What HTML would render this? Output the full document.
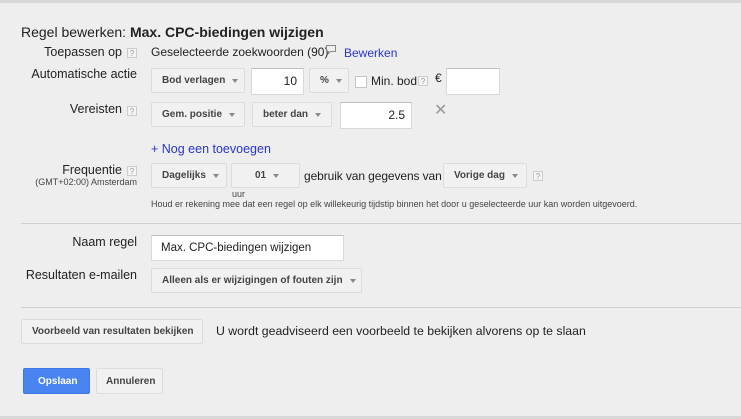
<!DOCTYPE html>
<html><head><meta charset="utf-8"><style>
*{box-sizing:border-box;margin:0;padding:0}
body{width:741px;height:419px;background:#eeeeee;font-family:"Liberation Sans",Arial,sans-serif;color:#222;position:relative;overflow:hidden;font-size:12px}
.a{position:absolute;white-space:nowrap}
.lbl{position:absolute;text-align:right;white-space:nowrap;font-size:12.5px}
.q{position:absolute;width:10px;height:10px;border:1px solid #ccc;background:#f4f4f4;font-size:8px;color:#999;text-align:center;line-height:9px}
.btn{position:absolute;border:1px solid #dcdcdc;background:#f1f1f1;border-radius:2px;font-weight:bold;font-size:10px;color:#444;display:flex;align-items:center;padding-left:10px;white-space:nowrap;overflow:hidden}
.btn .c{display:inline-block;width:0;height:0;border-left:3.5px solid transparent;border-right:3.5px solid transparent;border-top:4px solid #888;margin-left:7px}
.inp{position:absolute;background:#fff;border:1px solid #d9d9d9;border-top-color:#c0c0c0;font-size:12px;line-height:25px;padding:0 6px}
.hr{position:absolute;left:21px;right:0;height:1px;background:#d0d0d0}
</style></head><body>
<div class="a" style="left:0;right:0;top:0;height:3px;background:#d8d8d8"></div>
<div class="a" style="left:21px;top:24px;font-size:14px">Regel bewerken: <b>Max. CPC-biedingen wijzigen</b></div>

<div class="lbl" style="right:619px;top:45px">Toepassen op</div>
<div class="q" style="left:127px;top:48px">?</div>
<div class="a" style="left:151px;top:45px;font-size:12px">Geselecteerde zoekwoorden (90)</div>
<svg class="a" style="left:326px;top:45px" width="10" height="9"><path d="M0.5 0.5h9v6h-5l-2 2v-2h-2z" fill="none" stroke="#888"/></svg>
<div class="a" style="left:344px;top:46px;color:#2a34d0">Bewerken</div>

<div class="lbl" style="right:604px;top:67px">Automatische actie</div>
<div class="btn" style="left:151px;top:68px;width:94px;height:25px">Bod verlagen<span class="c"></span></div>
<div class="inp" style="left:251px;top:68px;width:53px;height:27px;text-align:right">10</div>
<div class="btn" style="left:309px;top:68px;width:40px;height:25px">%<span class="c"></span></div>
<div class="a" style="left:355px;top:76px;width:12px;height:12px;border:1px solid #c6c6c6;background:#fff"></div>
<div class="a" style="left:371px;top:74px;font-size:12px">Min. bod</div>
<div class="q" style="left:418px;top:76px">?</div>
<div class="a" style="left:435px;top:71px">€</div>
<div class="inp" style="left:446px;top:68px;width:54px;height:27px"></div>

<div class="lbl" style="right:619px;top:102px">Vereisten</div>
<div class="q" style="left:127px;top:106px">?</div>
<div class="btn" style="left:151px;top:102px;width:94px;height:25px">Gem. positie<span class="c"></span></div>
<div class="btn" style="left:252px;top:102px;width:80px;height:25px">beter dan<span class="c"></span></div>
<div class="inp" style="left:340px;top:102px;width:72px;height:27px;text-align:right">2.5</div>
<div class="a" style="left:434px;top:100px;font-size:16px;color:#999">✕</div>

<div class="a" style="left:151px;top:142px;color:#2a34d0;font-size:12.5px">+ Nog een toevoegen</div>

<div class="lbl" style="right:619px;top:163px">Frequentie</div>
<div class="q" style="left:127px;top:166px">?</div>
<div class="lbl" style="right:604px;top:177px;font-size:9px;color:#444">(GMT+02:00) Amsterdam</div>
<div class="btn" style="left:151px;top:163px;width:76px;height:25px">Dagelijks<span class="c"></span></div>
<div class="btn" style="left:231px;top:163px;width:69px;height:25px;padding-left:23px">01<span class="c"></span></div>
<div class="a" style="left:304px;top:169px;font-size:12px;letter-spacing:-0.1px">gebruik van gegevens van</div>
<div class="btn" style="left:443px;top:163px;width:84px;height:25px">Vorige dag<span class="c"></span></div>
<div class="q" style="left:533px;top:171px">?</div>
<div class="a" style="left:232px;top:189px;font-size:9px;color:#444">uur</div>
<div class="a" style="left:151px;top:199px;font-size:9px;color:#444">Houd er rekening mee dat een regel op elk willekeurig tijdstip binnen het door u geselecteerde uur kan worden uitgevoerd.</div>

<div class="hr" style="top:223px"></div>

<div class="lbl" style="right:604px;top:235px">Naam regel</div>
<div class="inp" style="left:151px;top:235px;width:193px;height:26px;font-size:11.5px;padding-left:9px">Max. CPC-biedingen wijzigen</div>
<div class="lbl" style="right:604px;top:268px">Resultaten e-mailen</div>
<div class="btn" style="left:151px;top:268px;width:211px;height:25px">Alleen als er wijzigingen of fouten zijn<span class="c"></span></div>

<div class="hr" style="top:307px"></div>

<div class="btn" style="left:21px;top:319px;width:182px;height:25px">Voorbeeld van resultaten bekijken</div>
<div class="a" style="left:216px;top:324px;font-size:12.3px">U wordt geadviseerd een voorbeeld te bekijken alvorens op te slaan</div>

<div class="btn" style="left:23px;top:368px;width:67px;height:26px;background:#4a84f0;border-color:#3c78e8;color:#fff;padding-left:14px">Opslaan</div>
<div class="btn" style="left:96px;top:368px;width:67px;height:26px;padding-left:9px">Annuleren</div>

<div class="a" style="left:0;right:0;top:416px;height:3px;background:#d8d8d8"></div>
</body></html>
